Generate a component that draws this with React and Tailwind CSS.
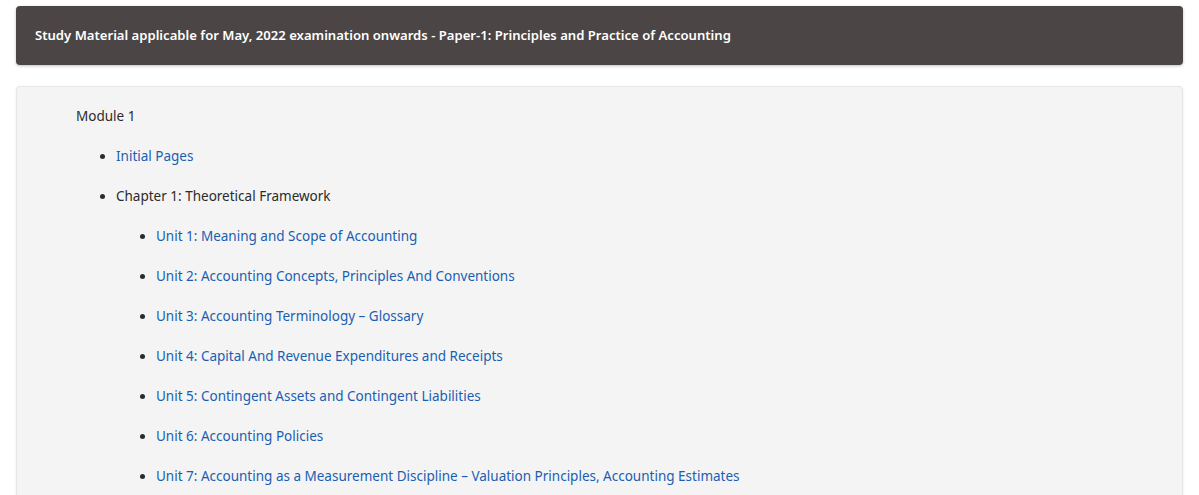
const units = [
  "Unit 1: Meaning and Scope of Accounting",
  "Unit 2: Accounting Concepts, Principles And Conventions",
  "Unit 3: Accounting Terminology – Glossary",
  "Unit 4: Capital And Revenue Expenditures and Receipts",
  "Unit 5: Contingent Assets and Contingent Liabilities",
  "Unit 6: Accounting Policies",
  "Unit 7: Accounting as a Measurement Discipline – Valuation Principles, Accounting Estimates",
];

export default function App() {
  return (
    <div className="min-h-screen bg-white px-4 pt-[6px] font-['Noto_Sans',sans-serif] text-[13.5px] text-[#2b2b2b]">
      <div className="flex h-[59px] items-center rounded bg-[#4b4545] px-[19px] pt-[1px] shadow-[0_1px_3px_rgba(0,0,0,0.25)]">
        <h1 className="text-[13.1px] font-semibold text-white">
          Study Material applicable for May, 2022 examination onwards - Paper-1: Principles and Practice of Accounting
        </h1>
      </div>

      <div className="mt-[21px] rounded border border-[#e6e6e6] bg-[#f4f4f4] px-[19px] pb-5 pt-[19px] shadow-[0_1px_3px_rgba(0,0,0,0.08)]">
        <div className="pl-10">
          <p className="leading-5">Module 1</p>
          <ul className="list-disc pl-10">
            <li className="mt-5 leading-5">
              <a href="#" className="text-[#1a5eb2]">Initial Pages</a>
            </li>
            <li className="mt-5 leading-5">
              Chapter 1: Theoretical Framework
              <ul className="list-disc pl-10">
                {units.map((u) => (
                  <li key={u} className="mt-5 leading-5">
                    <a href="#" className="text-[#1a5eb2]">{u}</a>
                  </li>
                ))}
              </ul>
            </li>
          </ul>
        </div>
      </div>
    </div>
  );
}
